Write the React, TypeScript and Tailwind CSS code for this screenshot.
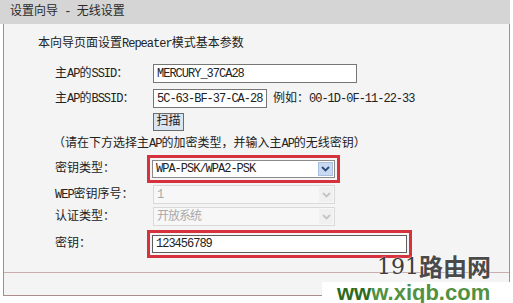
import type { ReactNode } from "react";

// half-width latin runs (SimSun style)
function L({ children }: { children: ReactNode }) {
  return <span className="whitespace-pre tracking-[-1px]">{children}</span>;
}

function Chevron({ color }: { color: string }) {
  return (
    <svg width="9" height="6" viewBox="0 0 9 6">
      <path d="M1 1 L4.5 4.5 L8 1" fill="none" stroke={color} strokeWidth="1.8" />
    </svg>
  );
}

function Label({ children }: { children: ReactNode }) {
  return <div className="w-[98px] shrink-0 whitespace-nowrap">{children}</div>;
}

function TextBox({ value, width }: { value: string; width: string }) {
  return (
    <div
      className={`flex h-[19px] items-center overflow-hidden whitespace-nowrap border border-[#767676] bg-white px-[3px] tracking-[-1px] ${width}`}
    >
      {value}
    </div>
  );
}

function Select({ value, disabled }: { value: ReactNode; disabled?: boolean }) {
  return (
    <div
      className={
        disabled
          ? "flex h-[19px] w-[182px] items-center border border-[#d9d9d9] bg-[#f7f7f7] text-[#a9a9a9]"
          : "flex h-[18px] w-[183px] items-center border border-[#8a8a8a] bg-white"
      }
    >
      <div className="flex-1 whitespace-nowrap px-[3px] tracking-[-1px]">{value}</div>
      <div
        className={
          disabled
            ? "mr-[1px] flex h-[15px] w-[14px] items-center justify-center bg-[#f0f0f0]"
            : "mr-[1px] flex h-[14px] w-[15px] items-center justify-center border border-[#a9bfe0] bg-[#c9d9f1]"
        }
      >
        <Chevron color={disabled ? "#c4c4c4" : "#2a4a7a"} />
      </div>
    </div>
  );
}

export default function App() {
  return (
    <div className="relative h-[303px] w-[513px] overflow-hidden bg-white font-['Liberation_Mono','Noto_Sans_CJK_SC',monospace] text-[12px] leading-none text-[#222]">
      <div className="flex h-[24px] w-[510px] items-center bg-[#d5d5d5] pl-[10px] text-[#2a2a2a]">
        设置向导<L> - </L>无线设置
      </div>

      <div className="ml-[3px] w-[507px] border-x border-b border-[#a98c8c] bg-[#f4f4f4]">
        <div className="flex flex-col pt-[10px]">
          <div className="flex h-[20px] items-center pl-[34px]">
            本向导页面设置<L>Repeater</L>模式基本参数
          </div>

          <div className="mt-[10px] flex h-[19px] items-center pl-[51px]">
            <Label>
              主<L>AP</L>的<L>SSID</L>：
            </Label>
            <TextBox value="MERCURY_37CA28" width="w-[204px]" />
          </div>

          <div className="mt-[6px] flex h-[19px] items-center pl-[51px]">
            <Label>
              主<L>AP</L>的<L>BSSID</L>：
            </Label>
            <TextBox value="5C-63-BF-37-CA-28" width="w-[114px]" />
            <span className="ml-[6px] whitespace-nowrap">
              例如：<L>00-1D-0F-11-22-33</L>
            </span>
          </div>

          <div className="mt-[5px] flex h-[18px] items-center pl-[51px]">
            <Label>{""}</Label>
            <button className="flex h-[18px] w-[31px] items-center justify-center border border-[#6c6c6c] bg-[#dae5f2] text-[12px]">
              扫描
            </button>
          </div>

          <div className="mt-[5px] flex h-[16px] items-center whitespace-nowrap pl-[49px]">
            （请在下方选择主<L>AP</L>的加密类型，并输入主<L>AP</L>的无线密钥）
          </div>

          <div className="mt-[3px] flex h-[28px] items-center pl-[51px]">
            <Label>密钥类型：</Label>
            <div className="-ml-[6px] border-[3px] border-[#d6323d] p-[2px]">
              <Select value="WPA-PSK/WPA2-PSK" />
            </div>
          </div>

          <div className="mt-[2px] flex h-[19px] items-center pl-[51px]">
            <Label>
              <L>WEP</L>密钥序号：
            </Label>
            <Select value="1" disabled />
          </div>

          <div className="mt-[3px] flex h-[19px] items-center pl-[51px]">
            <Label>认证类型：</Label>
            <Select value="开放系统" disabled />
          </div>

          <div className="mt-[3px] flex h-[29px] items-center pl-[51px]">
            <Label>密钥：</Label>
            <div className="-ml-[6px] border-[3px] border-[#d6323d] p-[2px]">
              <div className="flex h-[18px] w-[255px] items-center border border-[#5e5e5e] bg-white px-[3px] tracking-[-1px]">
                123456789
              </div>
            </div>
          </div>
        </div>

        <div className="mt-[14px] h-[23px] border-t border-[#c8aeae]" />
      </div>

      {/* watermark */}
      <div className="absolute left-[377px] top-[253px] flex h-[25px] items-end text-[#4a4a4a] [text-shadow:0_0_2px_#fff]">
        <span className="font-['DejaVu_Serif',serif] text-[22px] leading-none text-[#3c3c3c]">191</span>
        <span className="font-['Noto_Sans_CJK_SC',sans-serif] text-[24px] font-bold leading-none">
          路由网
        </span>
      </div>
      <div className="absolute left-[322px] top-[282px] flex h-[21px] w-[191px] items-center bg-white pl-[15px] font-['Liberation_Sans',sans-serif] text-[22px] font-bold leading-none">
        <span className="text-[#2d6a1c]">ww</span>
        <span className="text-[#52913f]">w.xiqb.com</span>
      </div>
    </div>
  );
}
